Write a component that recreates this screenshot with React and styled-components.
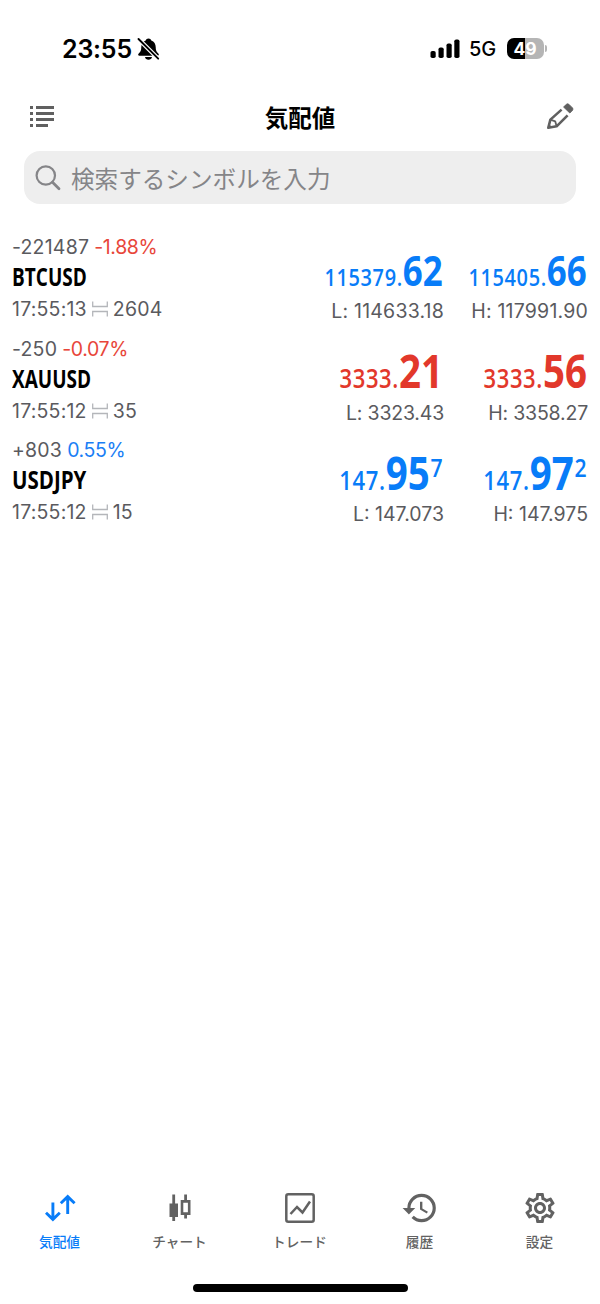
import React, { useState } from "react";
import styled, { createGlobalStyle } from "styled-components";
import { MdHistory, MdOutlineSettings } from "react-icons/md";

const GlobalStyle = createGlobalStyle`
  * {
    box-sizing: border-box;
  }
  body {
    margin: 0;
    background: #fff;
    font-family: Inter, "Noto Sans CJK JP", sans-serif;
  }
`;

const Screen = styled.div`
  display: flex;
  flex-direction: column;
  width: 600px;
  height: 1304px;
  overflow: hidden;
  background: #fff;
  color: #000;
`;

const StatusBar = styled.div`
  display: flex;
  align-items: center;
  justify-content: space-between;
  height: 90px;
  padding: 7px 53px 0 62px;
`;

const StatusGroup = styled.div`
  display: flex;
  align-items: center;
`;

const Clock = styled.span`
  font-size: 25px;
  font-weight: 600;
  line-height: 30px;
  letter-spacing: -0.2px;
  margin-right: 5px;
`;

const Network = styled.span`
  font-size: 20px;
  font-weight: 500;
  line-height: 30px;
  letter-spacing: -0.2px;
  margin: 1px 11px 0 9px;
`;

const Battery = styled.div`
  display: flex;
  align-items: center;
  justify-content: center;
  width: 37px;
  height: 21px;
  padding: 1px 1px 0 0;
  border-radius: 7px;
  background: linear-gradient(to right, #000 50%, #b5b5b5 50%);
  color: #fff;
  font-size: 17.5px;
  font-weight: 700;
  line-height: 20px;
`;

const BatteryCap = styled.div`
  width: 2px;
  height: 7px;
  margin-left: 1px;
  border-radius: 0 3px 3px 0;
  background: #b5b5b5;
`;

const Header = styled.header`
  display: flex;
  align-items: center;
  justify-content: space-between;
  height: 54px;
  padding: 0 26px 0 29px;
`;

const Title = styled.h1`
  margin: 0 1px 1px 0;
  font-family: "Noto Sans CJK JP", sans-serif;
  font-size: 23.5px;
  font-weight: 700;
  line-height: 34px;
`;

const SearchBox = styled.label`
  display: flex;
  align-items: center;
  height: 53px;
  margin: 7px 24px 0;
  padding: 0 11px;
  border-radius: 16px;
  background: #eeeeee;
`;

const SearchInput = styled.input`
  flex: 1;
  min-width: 0;
  margin-left: 8px;
  padding: 0;
  border: 0;
  outline: 0;
  background: transparent;
  font-family: "Noto Sans CJK JP", sans-serif;
  font-size: 23.6px;
  line-height: 36px;

  &::placeholder {
    color: #858588;
    opacity: 1;
  }
`;

const QuoteList = styled.main`
  flex: 1;
  padding: 29px 12px 0;
`;

const QuoteRow = styled.div`
  display: grid;
  grid-template-columns: 1fr 144px 144px;
  height: 101.5px;
`;

const Info = styled.div`
  display: flex;
  flex-direction: column;
`;

const Detail = styled.div`
  display: flex;
  align-items: center;
  height: ${(props) => props.$height}px;
  color: #5a5a5e;
  font-size: 19.5px;
  letter-spacing: ${(props) => props.$tracking ?? 0.2}px;
  white-space: nowrap;
`;

const Percent = styled.span`
  margin-left: 5px;
  color: ${(props) => (props.$up ? "#1a7ef5" : "#e8463a")};
  letter-spacing: -0.35px;
`;

const Symbol = styled.div`
  height: 32px;
  font-family: "Open Sans", sans-serif;
  font-size: 25px;
  font-weight: 700;
  line-height: 31px;
  transform: scaleX(${(props) => props.$stretch});
  transform-origin: left;
`;

const Side = styled.div`
  display: flex;
  flex-direction: column;
  align-items: flex-end;
`;

const Price = styled.div`
  display: flex;
  align-items: baseline;
  height: 64px;
  padding: ${(props) => (props.$long ? 7 : 5.5)}px 1px 0 0;
  color: ${(props) => (props.$up ? "#087cf8" : "#e2382b")};
  font-family: "Open Sans", sans-serif;
  font-weight: 600;
  font-size: ${(props) => (props.$long ? 24 : 26.5)}px;
  line-height: 60px;
  letter-spacing: 0.8px;
  transform: scaleX(0.83);
  transform-origin: right;
`;

const BigDigits = styled.span`
  font-size: 1.75em;
  font-weight: 700;
  letter-spacing: 0;
`;

const Pip = styled.span`
  align-self: flex-start;
  margin-left: 1px;
  font-size: 25.5px;
  line-height: 50px;
  letter-spacing: 0;
`;

const TabBar = styled.nav`
  display: grid;
  grid-template-columns: repeat(5, 1fr);
  height: 96px;
`;

const Tab = styled.button`
  display: flex;
  flex-direction: column;
  align-items: center;
  justify-content: flex-start;
  padding: 0 1px 0 0;
  border: 0;
  background: none;
  color: ${(props) => (props.$active ? "#087cf8" : "#626262")};
  font-family: "Noto Sans CJK JP", sans-serif;
  font-size: 13.7px;
  font-weight: 500;
  line-height: 20px;
`;

const TabIcon = styled.span`
  display: flex;
  align-items: center;
  justify-content: center;
  height: 40px;
  margin-bottom: 3px;
`;

const HomeIndicator = styled.div`
  width: 215px;
  height: 8px;
  margin: 0 auto 12px;
  border-radius: 4px;
  background: #000;
`;

const BellOffIcon = () => (
  <svg width="23" height="24" viewBox="0 0 23 24">
    <path
      d="M11.500 1.500c-1.500 0-2.400.8-2.800 1.900C5.800 4.500 4.300 7 4.300 10c0 3.500-.8 5-2.600 6.500-1 .9-.6 2.300.8 2.300h18c1.400 0 1.800-1.400.8-2.300C19.500 15 18.700 13.500 18.700 10c0-3-1.500-5.500-4.400-6.600-.4-1.100-1.300-1.900-2.800-1.900ZM8 20h7c-.3 1.700-1.600 2.800-3.500 2.800S8.300 21.700 8 20Z"
      fill="#000"
    />
    <path d="M2 2.500 21 21.500" stroke="#fff" strokeWidth="4.200" />
    <path
      d="M1.500 2 21.200 21.700"
      stroke="#000"
      strokeWidth="1.900"
      strokeLinecap="round"
    />
  </svg>
);

const SignalIcon = () => (
  <svg width="30" height="20" viewBox="0 0 30 20" fill="#000">
    <rect x="0.500" y="12" width="5.200" height="7" rx="1.800" />
    <rect x="8.500" y="8.500" width="5.200" height="10.500" rx="1.800" />
    <rect x="16.500" y="4.500" width="5.200" height="14.500" rx="1.800" />
    <rect x="24.300" y="0.500" width="5.200" height="18.500" rx="1.800" />
  </svg>
);

const ListIcon = () => (
  <svg width="26" height="22" viewBox="0 0 26 22" fill="#606060">
    <path d="M1 0h3v3H1zM7 0h18v3H7zM1 6h3v3H1zM7 6h18v3H7zM1 12h3v3H1zM7 12h18v3H7zM1 18h3v3H1zM7 18h12v3H7z" />
  </svg>
);

const PencilIcon = () => (
  <svg width="28" height="28" viewBox="0 0 28 28" fill="none">
    <g stroke="#606060" strokeWidth="2.600" strokeLinejoin="round">
      <path d="M15.600 6.600 4.400 16.600 2.300 24.800 10.600 23.300 21.600 12.300" />
      <path d="M4.400 16.600 9.200 18.300 10.600 23.300" strokeWidth="1.800" />
    </g>
    <path d="M1.500 25.500 2.600 20.800 6.700 24.600Z" fill="#606060" />
    <path
      d="M17.600 4 20.500 1.300Q21.700.4 22.800 1.300L26.500 5Q27.400 6 26.500 7.200L23.800 10Z"
      fill="#606060"
      stroke="#606060"
      strokeLinejoin="round"
    />
  </svg>
);

const SearchIcon = () => (
  <svg width="28" height="28" viewBox="0 0 28 28" fill="none">
    <circle cx="10.800" cy="11.500" r="9.200" stroke="#858588" strokeWidth="2.200" />
    <path
      d="m17.500 18.200 6.500 6.500"
      stroke="#858588"
      strokeWidth="2.800"
      strokeLinecap="round"
    />
  </svg>
);

const SpreadIcon = styled(({ className }) => (
  <svg
    className={className}
    width="16"
    height="16"
    viewBox="0 0 16 16"
    fill="none"
    stroke="#b4b6ba"
    strokeWidth="1.300"
  >
    <path d="M.7.500v5h14.600v-5M.7 15.500v-5h14.600v5" />
  </svg>
))`
  margin: 0 5px;
`;

const QuotesIcon = () => (
  <svg
    width="32"
    height="28"
    viewBox="0 0 32 28"
    fill="none"
    stroke="currentColor"
    strokeWidth="2.900"
  >
    <path d="M8.900 8.500v17M2 18.800l6.900 6.600 6.900-6.600M23.700 20V2.500M16.800 9.200l6.900-6.600 6.900 6.600" />
  </svg>
);

const CandlesIcon = () => (
  <svg width="24" height="28" viewBox="0 0 24 28">
    <path
      d="M4.300.5h2.800v9h2.900v13.500H7.100v4H4.300v-4H1.500V9.500h2.800z"
      fill="currentColor"
    />
    <path
      d="M16.200.5h2.800v5.500h3.500v15h-3.500v3.500h-2.800V21h-3.500V6h3.500zM15.300 8.800v9.500h4.600V8.800z"
      fillRule="evenodd"
      fill="currentColor"
    />
  </svg>
);

const TradeIcon = () => (
  <svg
    width="30"
    height="30"
    viewBox="0 0 30 30"
    fill="none"
    stroke="currentColor"
    strokeWidth="2.500"
  >
    <rect x="1.300" y="1.300" width="27.400" height="27.400" rx="2" />
    <path d="M5.500 21 12 14l5.500 5.500L25 8.500" />
  </svg>
);

const quotes = [
  {
    symbol: "BTCUSD",
    stretch: 0.76,
    points: "-221487",
    percent: "-1.88%",
    time: "17:55:13",
    spread: "2604",
    up: true,
    percentUp: false,
    bid: ["115379.", "62"],
    ask: ["115405.", "66"],
    low: "114633.18",
    high: "117991.90",
    tracking: 0.2,
  },
  {
    symbol: "XAUUSD",
    stretch: 0.76,
    points: "-250",
    percent: "-0.07%",
    time: "17:55:12",
    spread: "35",
    up: false,
    percentUp: false,
    bid: ["3333.", "21"],
    ask: ["3333.", "56"],
    low: "3323.43",
    high: "3358.27",
    tracking: -0.2,
  },
  {
    symbol: "USDJPY",
    stretch: 0.82,
    points: "+803",
    percent: "0.55%",
    time: "17:55:12",
    spread: "15",
    up: true,
    percentUp: true,
    bid: ["147.", "95", "7"],
    ask: ["147.", "97", "2"],
    low: "147.073",
    high: "147.975",
    tracking: 0,
  },
];

const tabs = [
  { label: "気配値", icon: <QuotesIcon /> },
  { label: "チャート", icon: <CandlesIcon /> },
  { label: "トレード", icon: <TradeIcon /> },
  { label: "履歴", icon: <MdHistory size={38} /> },
  { label: "設定", icon: <MdOutlineSettings size={36} /> },
];

const PriceSide = ({ price, up, range, tracking }) => (
  <Side>
    <Price $up={up} $long={price[0].length > 6}>
      <span>{price[0]}</span>
      <BigDigits>{price[1]}</BigDigits>
      {price[2] && <Pip>{price[2]}</Pip>}
    </Price>
    <Detail $height={28} $tracking={tracking}>
      {range}
    </Detail>
  </Side>
);

const App = () => {
  const [search, setSearch] = useState("");
  const [active, setActive] = useState("気配値");

  return (
    <>
      <GlobalStyle />
      <Screen>
        <StatusBar>
          <StatusGroup>
            <Clock>23:55</Clock>
            <BellOffIcon />
          </StatusGroup>
          <StatusGroup>
            <SignalIcon />
            <Network>5G</Network>
            <Battery>49</Battery>
            <BatteryCap />
          </StatusGroup>
        </StatusBar>
        <Header>
          <ListIcon />
          <Title>気配値</Title>
          <PencilIcon />
        </Header>
        <SearchBox>
          <SearchIcon />
          <SearchInput
            value={search}
            onChange={(e) => setSearch(e.target.value)}
            placeholder="検索するシンボルを入力"
          />
        </SearchBox>
        <QuoteList>
          {quotes.map((quote) => (
            <QuoteRow key={quote.symbol}>
              <Info>
                <Detail $height={28}>
                  {quote.points}
                  <Percent $up={quote.percentUp}>{quote.percent}</Percent>
                </Detail>
                <Symbol $stretch={quote.stretch}>{quote.symbol}</Symbol>
                <Detail $height={32}>
                  {quote.time}
                  <SpreadIcon />
                  {quote.spread}
                </Detail>
              </Info>
              <PriceSide
                price={quote.bid}
                up={quote.up}
                range={`L: ${quote.low}`}
                tracking={quote.tracking}
              />
              <PriceSide
                price={quote.ask}
                up={quote.up}
                range={`H: ${quote.high}`}
                tracking={quote.tracking}
              />
            </QuoteRow>
          ))}
        </QuoteList>
        <TabBar>
          {tabs.map((tab) => (
            <Tab
              key={tab.label}
              $active={active === tab.label}
              onClick={() => setActive(tab.label)}
            >
              <TabIcon>{tab.icon}</TabIcon>
              {tab.label}
            </Tab>
          ))}
        </TabBar>
        <HomeIndicator />
      </Screen>
    </>
  );
};

export default App;
